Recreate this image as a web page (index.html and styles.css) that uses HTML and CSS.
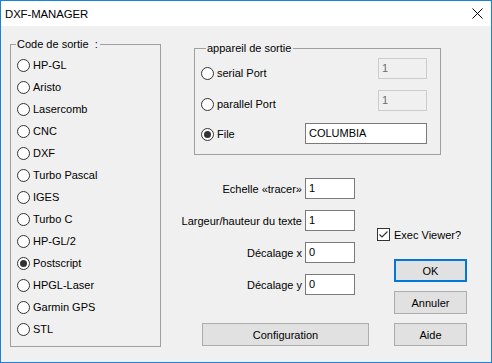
FILE: index.html
```html
<!DOCTYPE html>
<html>
<head>
<meta charset="utf-8">
<link rel="stylesheet" href="styles.css">
</head>
<body>
<div class="window">
  <div class="titlebar">
    <span class="title">DXF-MANAGER</span>
    <svg class="close" width="11" height="11" viewBox="0 0 11 11"><path d="M0.5 0.5 L10.5 10.5 M10.5 0.5 L0.5 10.5" stroke="#000" stroke-width="1" fill="none"/></svg>
  </div>
  <div class="client">
    <div class="group group-left">
      <div class="legend">Code de sortie&nbsp; :</div>
      <div class="radio-list">
        <div class="radio"><span class="circle"></span>HP-GL</div>
        <div class="radio"><span class="circle"></span>Aristo</div>
        <div class="radio"><span class="circle"></span>Lasercomb</div>
        <div class="radio"><span class="circle"></span>CNC</div>
        <div class="radio"><span class="circle"></span>DXF</div>
        <div class="radio"><span class="circle"></span>Turbo Pascal</div>
        <div class="radio"><span class="circle"></span>IGES</div>
        <div class="radio"><span class="circle"></span>Turbo C</div>
        <div class="radio"><span class="circle"></span>HP-GL/2</div>
        <div class="radio"><span class="circle checked"></span>Postscript</div>
        <div class="radio"><span class="circle"></span>HPGL-Laser</div>
        <div class="radio"><span class="circle"></span>Garmin GPS</div>
        <div class="radio"><span class="circle"></span>STL</div>
      </div>
    </div>
    <div class="right">
      <div class="group group-right">
        <div class="legend">appareil de sortie</div>
        <div class="port-row row-1">
          <div class="radio port-radio off-1"><span class="circle"></span>serial Port</div>
          <div class="edit small disabled">1</div>
        </div>
        <div class="port-row row-2">
          <div class="radio port-radio off-2"><span class="circle"></span>parallel Port</div>
          <div class="edit small disabled">1</div>
        </div>
        <div class="port-row row-3">
          <div class="radio port-radio off-3"><span class="circle checked"></span>File</div>
          <div class="edit wide">COLUMBIA</div>
        </div>
      </div>
      <div class="lower">
        <div class="fields">
          <div class="field"><span class="label">Echelle «tracer»</span><div class="edit num">1</div></div>
          <div class="field"><span class="label">Largeur/hauteur du texte</span><div class="edit num">1</div></div>
          <div class="field"><span class="label">Décalage x</span><div class="edit num">0</div></div>
          <div class="field"><span class="label">Décalage y</span><div class="edit num">0</div></div>
          <div class="btn config">Configuration</div>
        </div>
        <div class="actions">
          <div class="check">
            <span class="box"><svg width="11" height="11" viewBox="0 0 11 11"><path d="M1.5 5.5 L4 8 L9.5 2.5" stroke="#333" stroke-width="1.2" fill="none"/></svg></span>Exec Viewer?
          </div>
          <div class="btn default ok">OK</div>
          <div class="btn">Annuler</div>
          <div class="btn">Aide</div>
        </div>
      </div>
    </div>
  </div>
</div>
</body>
</html>
```
FILE: styles.css
```css
* { box-sizing: border-box; }
body {
  margin: 0;
  font-family: "Liberation Sans", Arial, sans-serif;
  font-size: 11px;
  color: #000;
  background: #fff;
}
.window {
  width: 492px;
  height: 363px;
  border: 1px solid #1883d7;
  background: #f0f0f0;
  display: flex;
  flex-direction: column;
}
.titlebar {
  height: 25px;
  background: #fff;
  display: flex;
  align-items: center;
  justify-content: space-between;
  padding-left: 4px;
  padding-right: 8px;
}
.title {
  font-size: 11.4px;
  letter-spacing: -0.1px;
}
.close { display: block; }
.client {
  flex: 1;
  display: flex;
  align-items: flex-start;
  padding-left: 9px;
}
.group {
  border: 1px solid #a0a0a0;
}
.legend {
  width: fit-content;
  height: 14px;
  line-height: 14px;
  margin-top: -8px;
  margin-left: 5px;
  padding: 0 2px 0 1px;
  background: #f0f0f0;
  white-space: pre;
}
.group-left {
  width: 151px;
  height: 303px;
  margin-top: 18px;
}
.radio-list {
  padding-top: 3px;
  padding-left: 6px;
}
.radio {
  height: 22px;
  display: flex;
  align-items: center;
}
.circle {
  width: 13px;
  height: 13px;
  border: 1px solid #333;
  border-radius: 50%;
  background: #fff;
  margin-right: 3px;
  display: flex;
  align-items: center;
  justify-content: center;
  flex: none;
}
.circle.checked::after {
  content: "";
  width: 7px;
  height: 7px;
  border-radius: 50%;
  background: #333;
}
.right {
  width: 273px;
  margin-left: 33px;
  margin-top: 22px;
}
.group-right {
  width: 247px;
  height: 107px;
  padding-left: 6px;
  padding-right: 13px;
}
.port-row {
  display: flex;
  justify-content: space-between;
  align-items: flex-start;
  height: 21px;
}
.row-1 { margin-top: 3px; }
.row-2 { margin-top: 11px; }
.row-3 { margin-top: 12px; }
.port-radio { height: 16px; }
.off-1 { margin-top: 7px; }
.off-2 { margin-top: 6px; }
.off-3 { margin-top: 3px; }
.edit {
  flex: none;
  height: 21px;
  border: 1px solid #7a7a7a;
  background: #fff;
  line-height: 19px;
  padding-left: 3px;
}
.edit.small { width: 49px; }
.edit.wide { width: 122px; }
.edit.num { width: 50px; }
.edit.disabled {
  border-color: #cccccc;
  background: #f0f0f0;
  color: #6d6d6d;
}
.lower {
  display: flex;
  align-items: flex-start;
}
.fields {
  width: 176px;
  flex: none;
  padding-top: 23px;
  display: flex;
  flex-direction: column;
  gap: 11px;
}
.field {
  display: flex;
  justify-content: flex-end;
  align-items: center;
  gap: 3px;
  padding-right: 15px;
  white-space: nowrap;
}
.label { flex: none; }
.btn {
  height: 23px;
  border: 1px solid #adadad;
  background: #e1e1e1;
  display: flex;
  align-items: center;
  justify-content: center;
}
.config {
  width: 167px;
  margin-left: 8px;
  margin-top: 17px;
}
.actions {
  flex: 1;
  display: flex;
  flex-direction: column;
  align-items: flex-end;
  padding-top: 73px;
}
.actions .btn {
  width: 73px;
  margin-top: 9px;
}
.actions .btn.ok { margin-top: 18px; }
.btn.default {
  border: 2px solid #0078d7;
}
.check {
  align-self: flex-start;
  margin-left: 7px;
  height: 13px;
  display: flex;
  align-items: center;
  white-space: nowrap;
}
.box {
  width: 13px;
  height: 13px;
  border: 1px solid #333;
  background: #fff;
  margin-right: 4px;
  display: flex;
  align-items: center;
  justify-content: center;
}
.box svg { display: block; }
```
